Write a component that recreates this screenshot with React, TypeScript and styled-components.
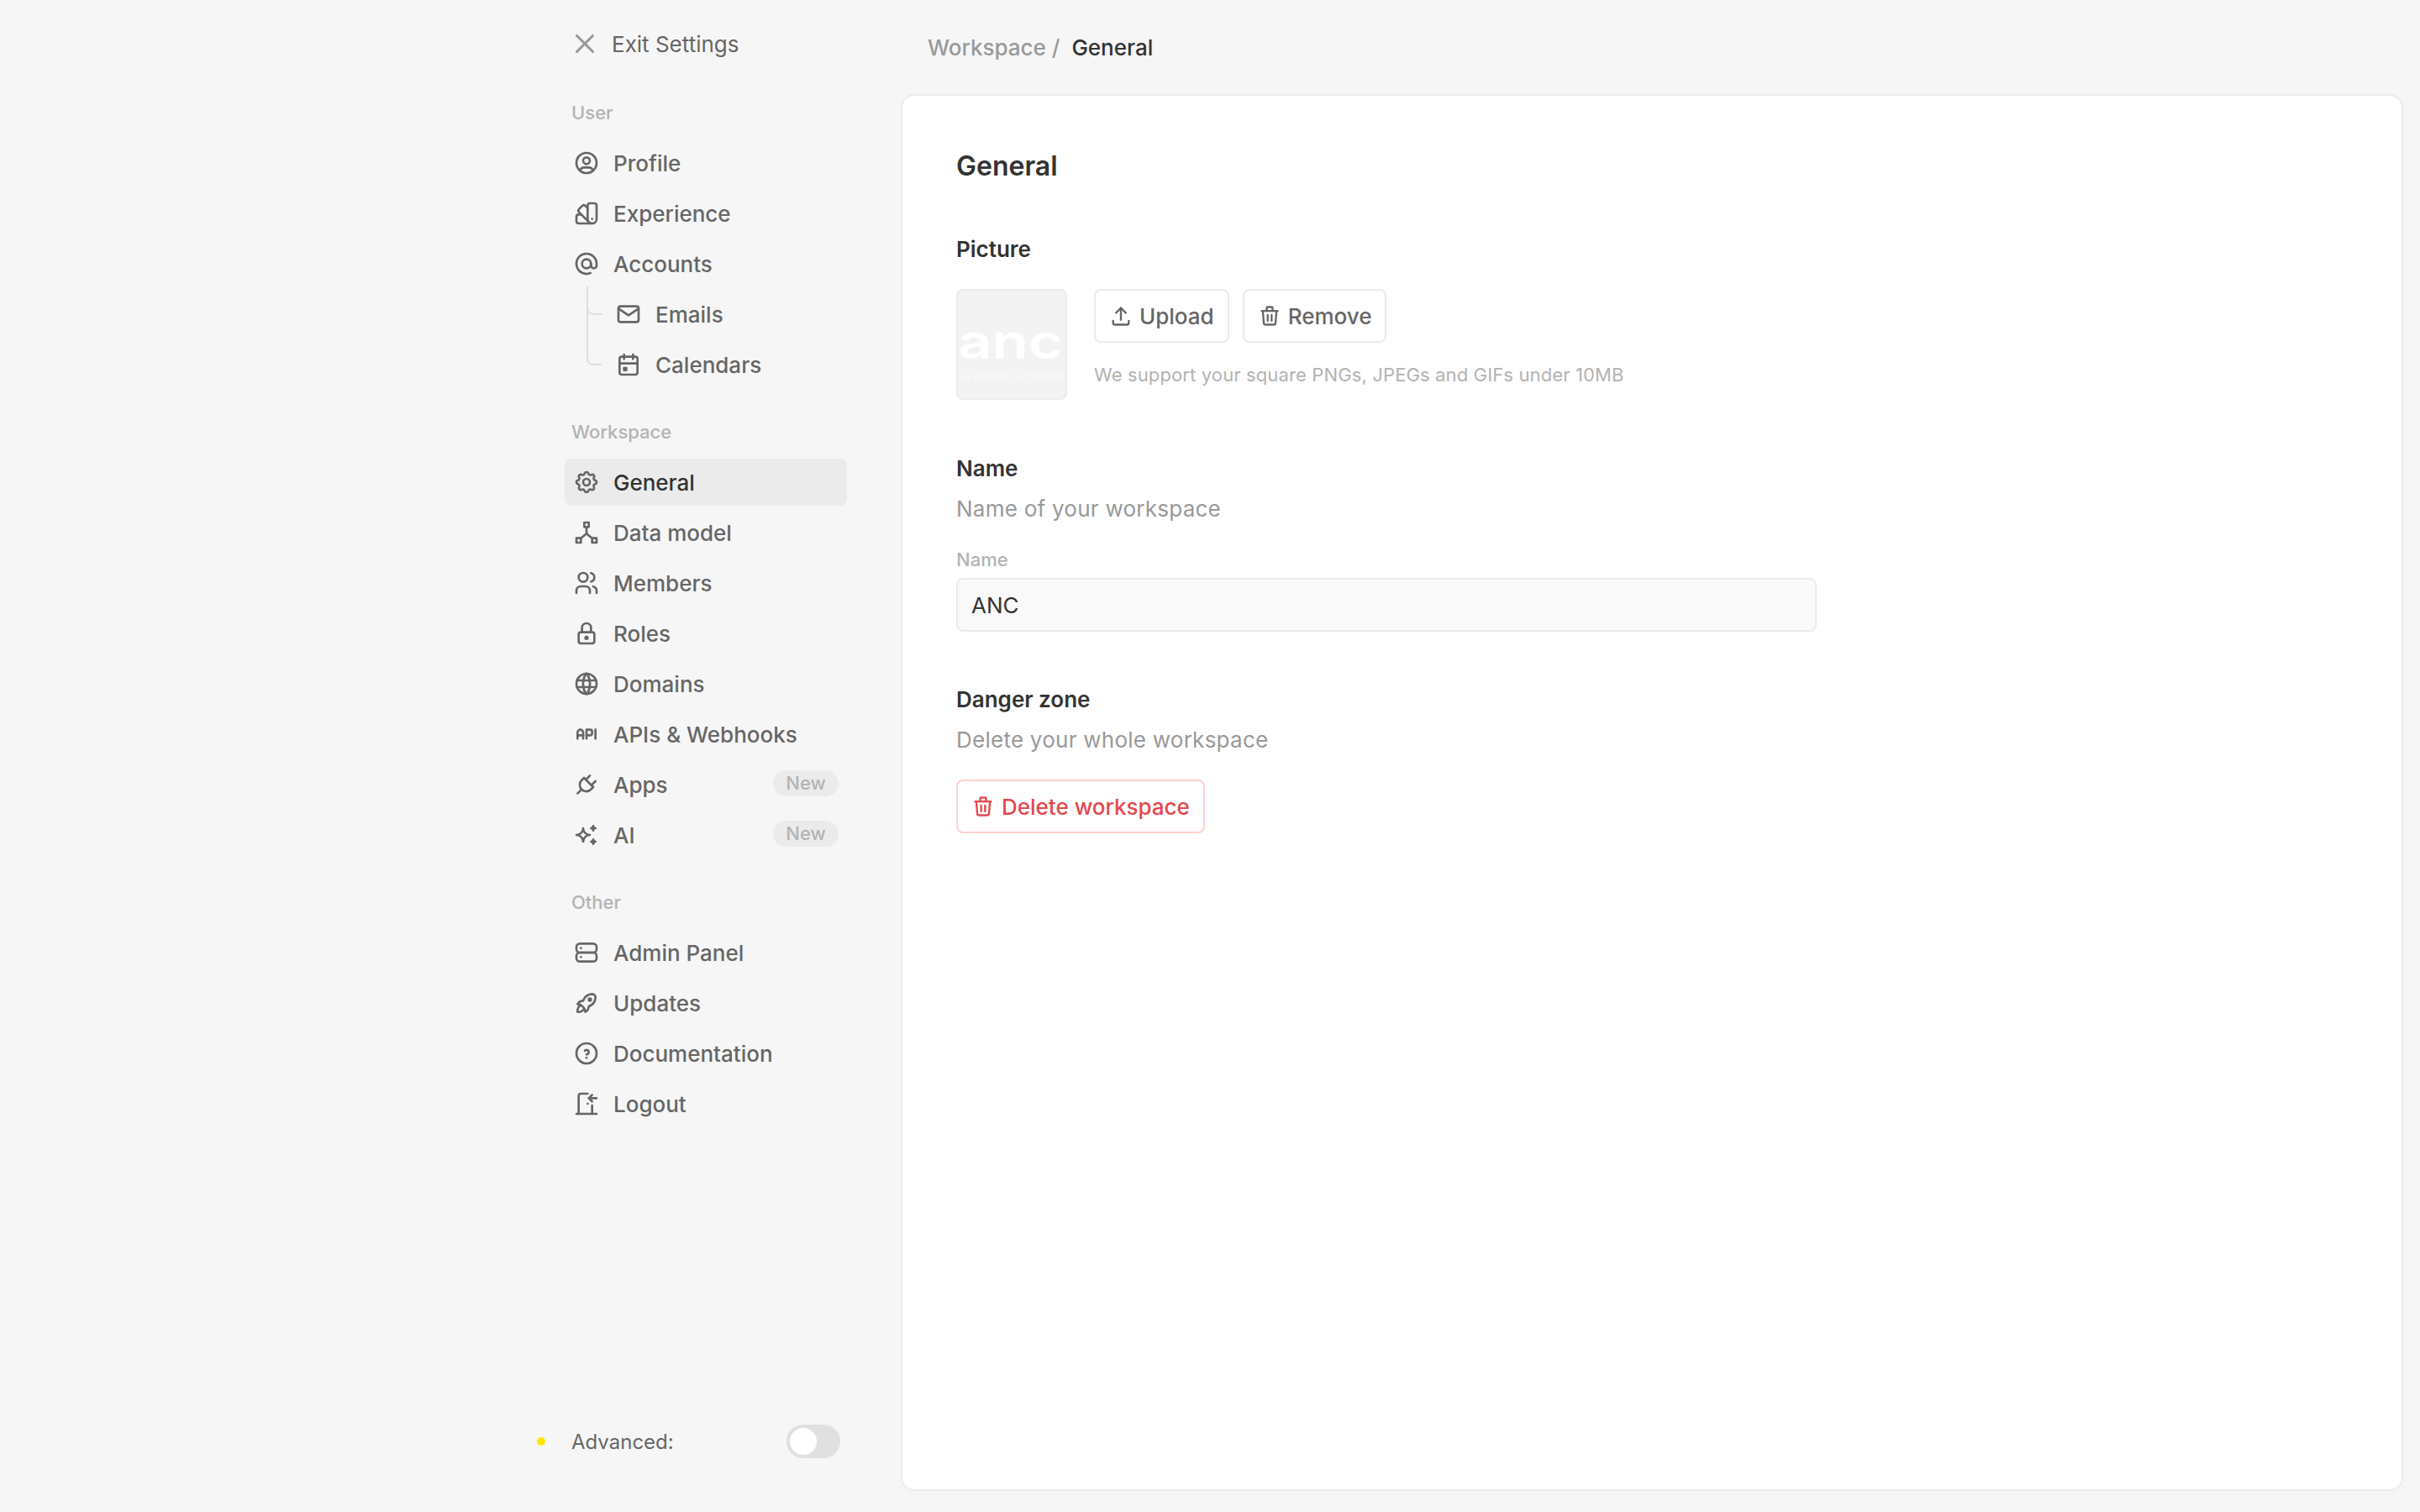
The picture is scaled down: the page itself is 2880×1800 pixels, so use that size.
import React, { FC, ReactNode } from 'react';
import styled, { createGlobalStyle } from 'styled-components';
import {
  TbApi,
  TbAt,
  TbCalendarEvent,
  TbColorSwatch,
  TbDoorEnter,
  TbHelpCircle,
  TbHierarchy2,
  TbLock,
  TbMail,
  TbPlug,
  TbRocket,
  TbServer,
  TbSettings,
  TbSparkles,
  TbTrash,
  TbUpload,
  TbUserCircle,
  TbUsers,
  TbWorld,
  TbX,
} from 'react-icons/tb';

const GlobalStyle = createGlobalStyle`
  *, *:before, *:after {
    box-sizing: border-box;
  }

  html, body {
    margin: 0;
    padding: 0;
    background: #f6f6f6;
    font-family: Inter, "Liberation Sans", sans-serif;
  }
`;

const Page = styled.div`
  display: flex;
  height: 1800px;
  padding-left: 672px;
  padding-right: 20px;
  gap: 64px;
`;

const Sidebar = styled.aside`
  display: flex;
  flex-direction: column;
  flex: 0 0 336px;
  padding-top: 32px;
  padding-bottom: 64px;
`;

const ExitRow = styled.div`
  display: flex;
  align-items: center;
  gap: 13px;
  height: 40px;
  padding-left: 5px;
  margin-bottom: 50px;
  color: #666;
  font-size: 26px;
  font-weight: 400;

  svg {
    color: #999;
  }
`;

const Section = styled.section`
  display: flex;
  flex-direction: column;
  gap: 4px;
  margin-bottom: 40px;
`;

const SectionTitle = styled.div`
  height: 24px;
  line-height: 24px;
  padding-left: 8px;
  margin-bottom: 16px;
  color: #b3b3b3;
  font-size: 22px;
  font-weight: 500;
`;

const NavRow = styled.div<{ $active?: boolean; $nested?: boolean }>`
  position: relative;
  display: flex;
  align-items: center;
  height: 56px;
  gap: 16px;
  padding-left: ${(p) => (p.$nested ? '60px' : '10px')};
  padding-right: 10px;
  border-radius: 8px;
  background: ${(p) => (p.$active ? '#ebebeb' : 'transparent')};
  color: ${(p) => (p.$active ? '#333' : '#666')};
  font-size: 26px;
  font-weight: 500;

  svg {
    flex: none;
    color: #666;
  }
`;

const Branch = styled.span<{ $last?: boolean }>`
  position: absolute;
  left: 26px;
  top: ${(p) => (p.$last ? '-36px' : '-5px')};
  width: 18px;
  height: ${(p) => (p.$last ? '65px' : '34px')};
  border-left: 2px solid #dedede;
  border-bottom: 2px solid #dedede;
  border-bottom-left-radius: 8px;
`;

const NewPill = styled.span`
  margin-left: auto;
  width: 78px;
  height: 31px;
  margin-top: -3px;
  line-height: 30px;
  text-align: center;
  border-radius: 16px;
  background: #ebebeb;
  color: #b3b3b3;
  font-size: 22px;
  font-weight: 500;
`;

const AdvancedRow = styled.div`
  display: flex;
  align-items: center;
  margin-top: auto;
  margin-left: -33px;
  margin-right: 8px;
  gap: 31px;
  height: 40px;
  color: #666;
  font-size: 24px;
  font-weight: 400;
`;

const Dot = styled.span`
  width: 10px;
  height: 10px;
  border-radius: 50%;
  background: #ffe600;
`;

const Toggle = styled.span`
  display: flex;
  align-items: center;
  width: 64px;
  height: 40px;
  margin-left: auto;
  padding-left: 4px;
  border-radius: 20px;
  background: #e0e0e0;

  &::after {
    content: '';
    width: 32px;
    height: 32px;
    border-radius: 50%;
    background: #fff;
  }
`;

const Main = styled.main`
  display: flex;
  flex-direction: column;
  flex: 1;
  min-width: 0;
  padding-bottom: 25px;
`;

const Breadcrumb = styled.div`
  display: flex;
  align-items: center;
  gap: 14px;
  height: 112px;
  padding-left: 32px;
  color: #999;
  font-size: 26px;
  font-weight: 500;

  b {
    color: #333;
    font-weight: 500;
  }
`;

const Card = styled.div`
  flex: 1;
  padding: 65px 64px;
  background: #fff;
  border: 2px solid #ebebeb;
  border-radius: 16px;
`;

const PageTitle = styled.h1`
  margin: 0 0 64px;
  height: 38px;
  line-height: 38px;
  color: #333;
  font-size: 32px;
  font-weight: 600;
`;

const FieldTitle = styled.h2`
  margin: 0;
  height: 32px;
  line-height: 32px;
  color: #333;
  font-size: 26px;
  font-weight: 600;
`;

const FieldDesc = styled.p`
  margin: 16px 0 0;
  height: 32px;
  line-height: 32px;
  color: #999;
  font-size: 26px;
  font-weight: 400;
  letter-spacing: 0.25px;
`;

const PictureRow = styled.div`
  display: flex;
  gap: 32px;
  margin-top: 31px;
  margin-bottom: 66px;
`;

const Avatar = styled.div`
  flex: none;
  width: 132px;
  height: 132px;
  background: #f3f3f3;
  border: 2px solid #ebebeb;
  border-radius: 8px;
  overflow: hidden;

  svg {
    display: block;
  }
`;

const PictureActions = styled.div`
  display: flex;
  flex-direction: column;
  gap: 23px;
`;

const ButtonRow = styled.div`
  display: flex;
  gap: 16px;
`;

const Button = styled.button<{ $danger?: boolean }>`
  display: inline-flex;
  align-items: center;
  gap: 8px;
  height: 64px;
  padding: 0 16px;
  background: #fff;
  border: 2px solid ${(p) => (p.$danger ? '#fdd0d0' : '#ebebeb')};
  border-radius: 8px;
  color: ${(p) => (p.$danger ? '#e5484d' : '#666')};
  font-family: inherit;
  font-size: 26px;
  font-weight: 500;
`;

const Hint = styled.div`
  height: 30px;
  line-height: 30px;
  color: #b3b3b3;
  font-size: 22px;
  font-weight: 400;
  letter-spacing: 0.13px;
`;

const InputLabel = styled.label`
  display: block;
  margin-top: 30px;
  height: 28px;
  line-height: 28px;
  color: #b3b3b3;
  font-size: 22px;
  font-weight: 500;
`;

const Input = styled.div`
  display: flex;
  align-items: center;
  width: 1024px;
  height: 64px;
  margin-top: 8px;
  margin-bottom: 65px;
  padding: 0 16px;
  background: #fafafa;
  border: 2px solid #ebebeb;
  border-radius: 8px;
  color: #333;
  font-size: 26px;
`;

const DangerActions = styled.div`
  margin-top: 31px;
`;

const stroke = { strokeWidth: 2 };

const Item: FC<{ icon: ReactNode; label: string; active?: boolean; isNew?: boolean }> = ({
  icon,
  label,
  active,
  isNew,
}) => (
  <NavRow $active={active}>
    {icon}
    {label}
    {isNew && <NewPill>New</NewPill>}
  </NavRow>
);

const App: FC = () => {
  return (
    <>
      <GlobalStyle />
      <Page>
        <Sidebar>
          <ExitRow>
            <TbX size={38} {...stroke} />
            Exit Settings
          </ExitRow>

          <Section>
            <SectionTitle>User</SectionTitle>
            <Item icon={<TbUserCircle size={32} {...stroke} />} label="Profile" />
            <Item icon={<TbColorSwatch size={32} {...stroke} />} label="Experience" />
            <Item icon={<TbAt size={32} {...stroke} />} label="Accounts" />
            <NavRow $nested>
              <Branch />
              <TbMail size={32} {...stroke} />
              Emails
            </NavRow>
            <NavRow $nested>
              <Branch $last />
              <TbCalendarEvent size={32} {...stroke} />
              Calendars
            </NavRow>
          </Section>

          <Section>
            <SectionTitle>Workspace</SectionTitle>
            <Item icon={<TbSettings size={32} {...stroke} />} label="General" active />
            <Item icon={<TbHierarchy2 size={32} {...stroke} />} label="Data model" />
            <Item icon={<TbUsers size={32} {...stroke} />} label="Members" />
            <Item icon={<TbLock size={32} {...stroke} />} label="Roles" />
            <Item icon={<TbWorld size={32} {...stroke} />} label="Domains" />
            <Item icon={<TbApi size={32} {...stroke} />} label="APIs & Webhooks" />
            <Item icon={<TbPlug size={32} {...stroke} />} label="Apps" isNew />
            <Item icon={<TbSparkles size={32} {...stroke} />} label="AI" isNew />
          </Section>

          <Section>
            <SectionTitle>Other</SectionTitle>
            <Item icon={<TbServer size={32} {...stroke} />} label="Admin Panel" />
            <Item icon={<TbRocket size={32} {...stroke} />} label="Updates" />
            <Item icon={<TbHelpCircle size={32} {...stroke} />} label="Documentation" />
            <Item icon={<TbDoorEnter size={32} {...stroke} />} label="Logout" />
          </Section>

          <AdvancedRow>
            <Dot />
            Advanced:
            <Toggle />
          </AdvancedRow>
        </Sidebar>

        <Main>
          <Breadcrumb>
            <span>Workspace /</span>
            <b>General</b>
          </Breadcrumb>

          <Card>
            <PageTitle>General</PageTitle>

            <FieldTitle>Picture</FieldTitle>
            <PictureRow>
              <Avatar>
                <svg width="128" height="128" viewBox="0 0 128 128">
                  <text
                    x="0"
                    y="81"
                    textLength="125"
                    lengthAdjust="spacingAndGlyphs"
                    fill="#fff"
                    fontFamily="Inter, sans-serif"
                    fontWeight="600"
                    fontSize="57"
                  >
                    anc
                  </text>
                  <text
                    x="2"
                    y="106"
                    textLength="124"
                    lengthAdjust="spacingAndGlyphs"
                    fill="#fff"
                    fillOpacity="0.6"
                    fontFamily="'DejaVu Sans', sans-serif"
                    fontSize="11"
                  >
                    www/anc/com
                  </text>
                </svg>
              </Avatar>
              <PictureActions>
                <ButtonRow>
                  <Button>
                    <TbUpload size={28} {...stroke} />
                    Upload
                  </Button>
                  <Button>
                    <TbTrash size={28} {...stroke} />
                    Remove
                  </Button>
                </ButtonRow>
                <Hint>We support your square PNGs, JPEGs and GIFs under 10MB</Hint>
              </PictureActions>
            </PictureRow>

            <FieldTitle>Name</FieldTitle>
            <FieldDesc>Name of your workspace</FieldDesc>
            <InputLabel>Name</InputLabel>
            <Input>ANC</Input>

            <FieldTitle>Danger zone</FieldTitle>
            <FieldDesc>Delete your whole workspace</FieldDesc>
            <DangerActions>
              <Button $danger>
                <TbTrash size={28} {...stroke} />
                Delete workspace
              </Button>
            </DangerActions>
          </Card>
        </Main>
      </Page>
    </>
  );
};

export default App;
